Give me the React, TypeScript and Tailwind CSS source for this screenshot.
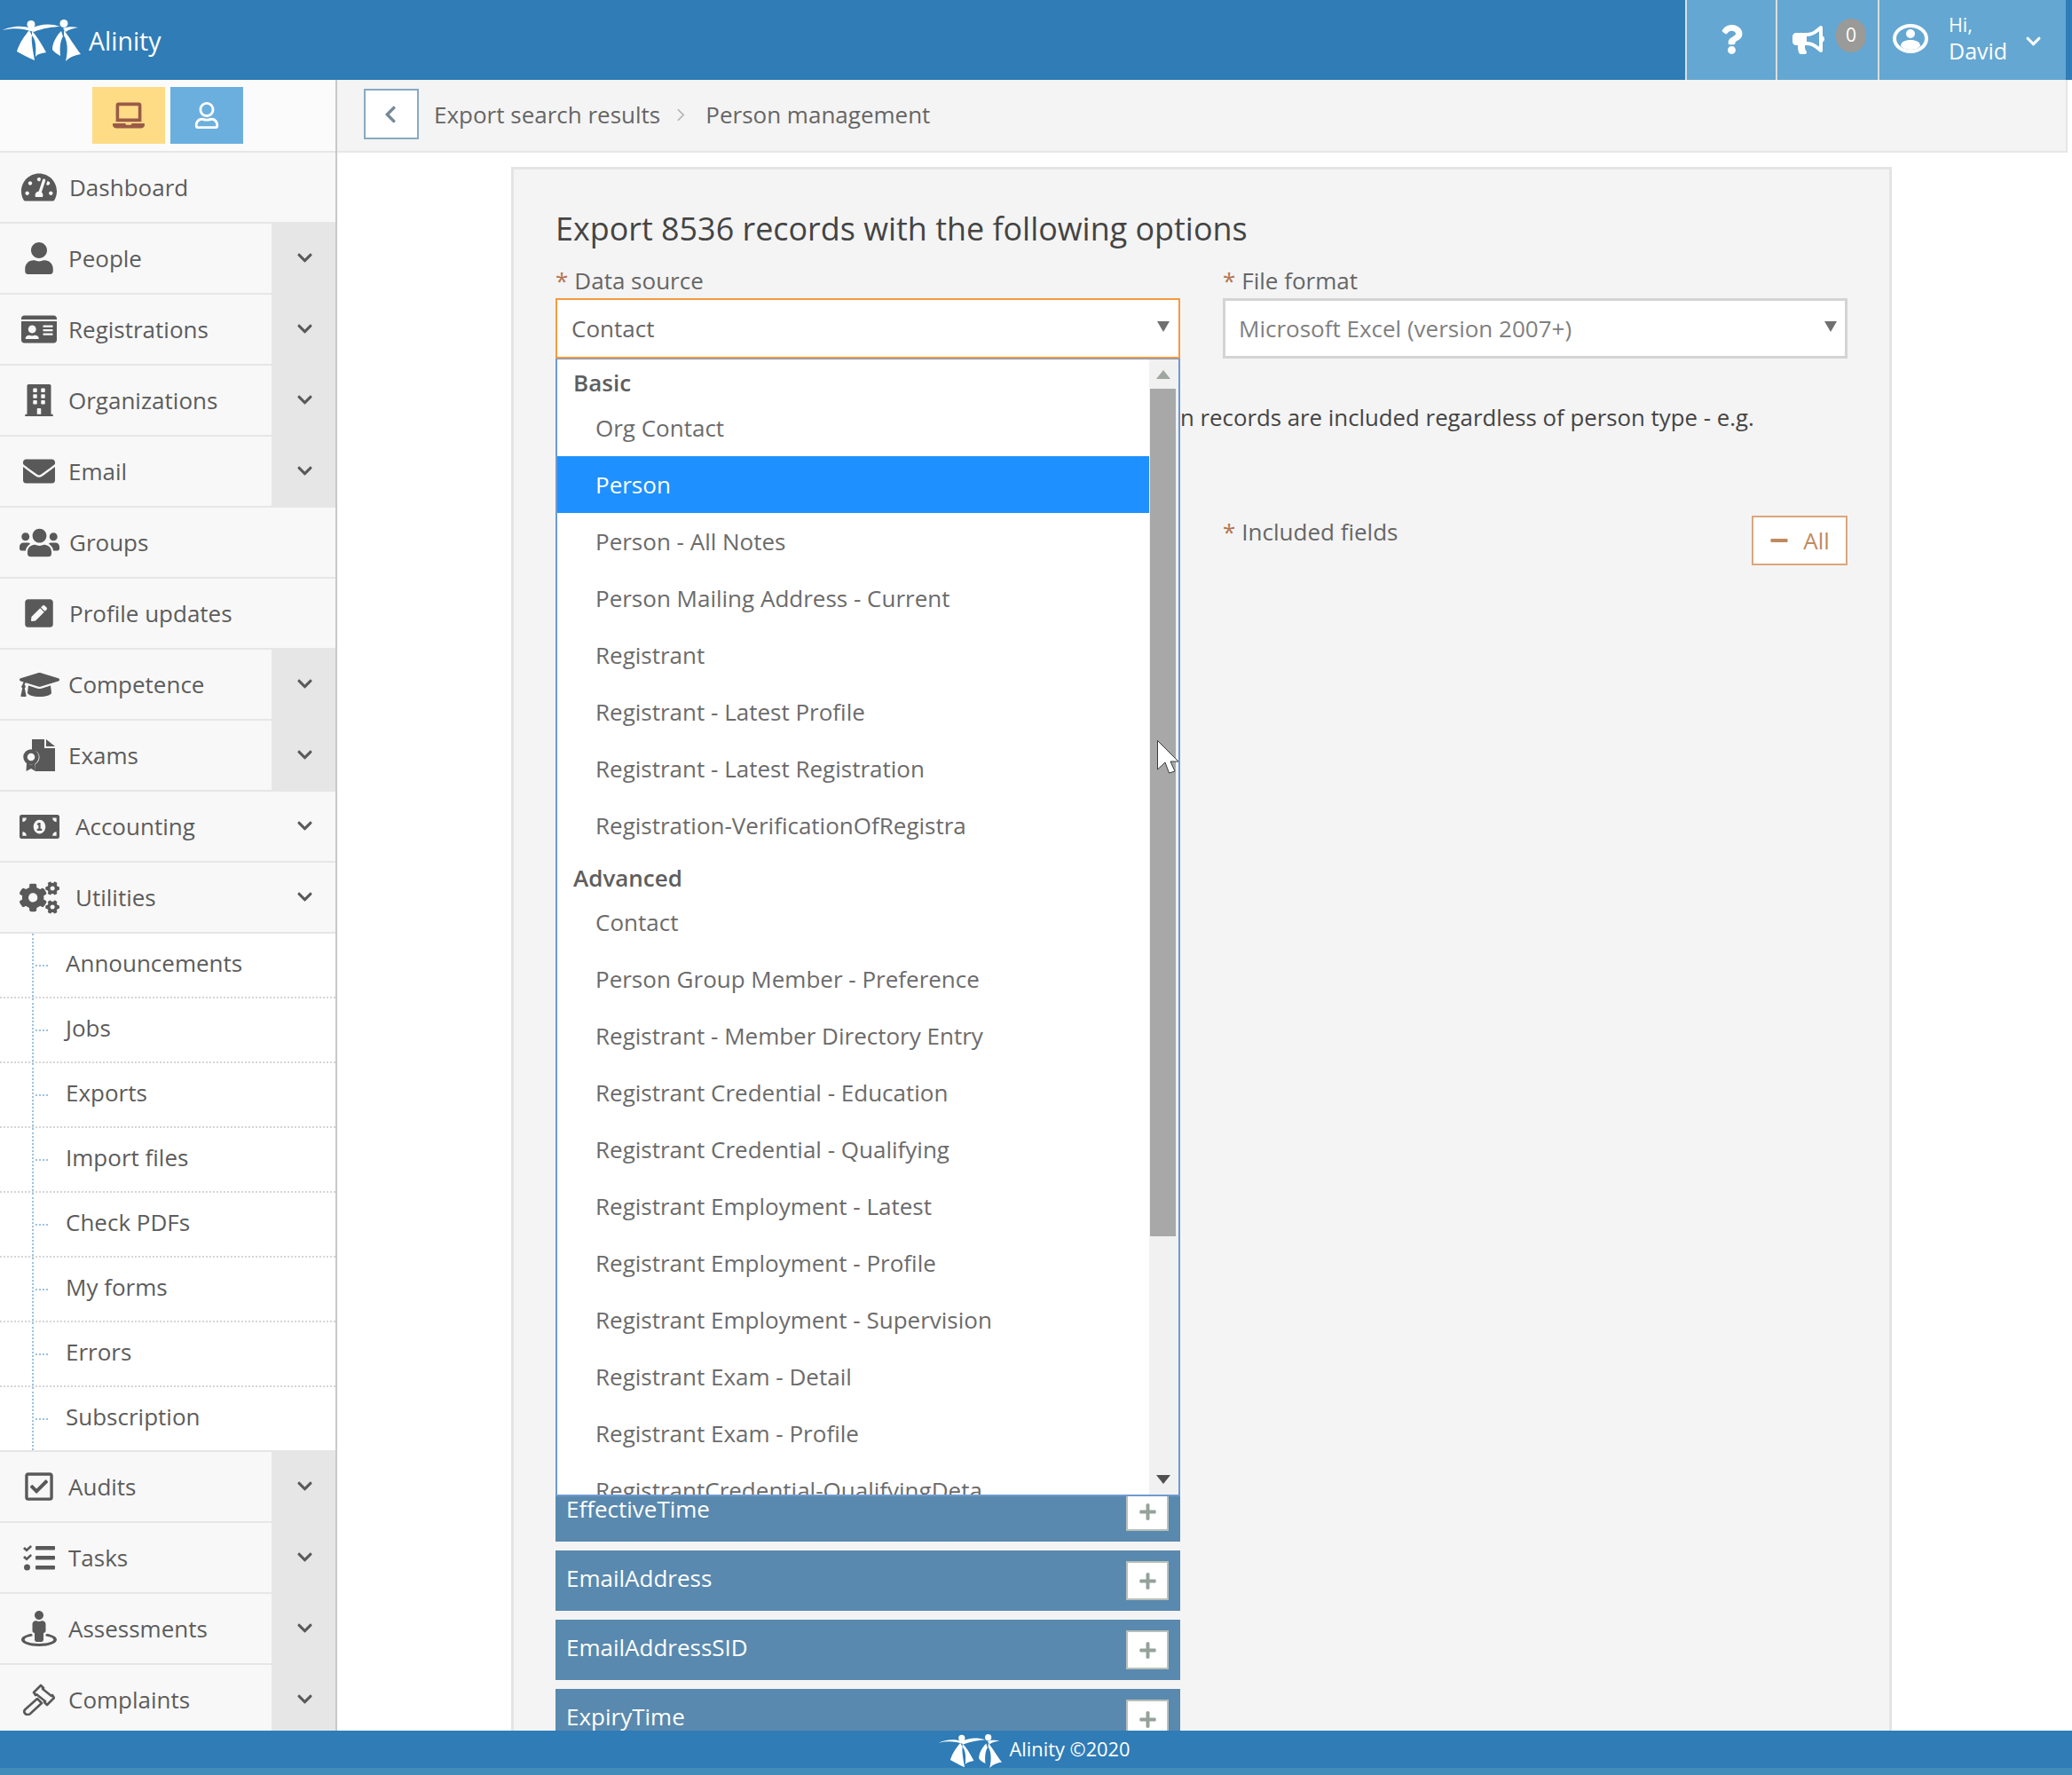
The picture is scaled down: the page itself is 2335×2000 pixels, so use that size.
import type { ReactNode } from 'react'
import {
  FaTachometerAlt, FaUser, FaIdCard, FaBuilding, FaEnvelope, FaUsers, FaPenSquare, FaGraduationCap,
  FaMoneyBillAlt, FaCogs, FaRegCheckSquare, FaStreetView, FaChevronDown, FaChevronLeft, FaLaptop,
  FaRegUser, FaQuestion, FaBullhorn, FaPlus, FaMinus,
} from 'react-icons/fa'

function Logo({ className }: { className: string }) {
  return (
    <svg viewBox="0 0 88 47" className={className} fill="#fff">
      <circle cx="32" cy="5.500" r="4.500" />
      <circle cx="69" cy="4.500" r="4.500" />
      <path d="M0 12C8 8 22 6 32 10C42 5 54 4 65 8C58 8 44 10 35 14C24 10 12 9 0 12Z" />
      <path d="M68 10C73 8 79 8 85 9C80 10 75 11 71 14Z" />
      <path d="M30 12C25 18 19 26 16 36C22 39 28 43 36 46C34 34 32 24 33 18Z" />
      <path d="M33 13C38 18 43 26 49 37C44 38 39 39 37 42C38 30 37 22 33 18Z" />
      <path d="M66 13C60 19 56 27 56 34C58 37 62 39 65 41C64 31 65 24 68 19Z" />
      <path d="M69 12C74 18 81 30 88 39C82 40 76 42 71 47C74 35 73 24 69 18Z" />
    </svg>
  )
}

function AccountIcon() {
  return (
    <svg viewBox="0 0 40 33" preserveAspectRatio="none" className="w-[40px] h-[33px] -mt-[4px]">
      <ellipse cx="20" cy="16.500" rx="18" ry="14.500" fill="none" stroke="#fff" strokeWidth="4" />
      <circle cx="20" cy="11" r="5" fill="#fff" />
      <path d="M9 25C9 20 14 18 20 18C26 18 31 20 31 25C28 28 24 29 20 29C16 29 12 28 9 25Z" fill="#fff" />
    </svg>
  )
}

function ExamIcon() {
  return (
    <svg viewBox="0 0 36 36" className="w-[36px] h-[36px]" fill="#595959">
      <path d="M10 0H24V10H36V36H14V28C20 24 20 16 14 13H10Z" />
      <path d="M26 0L36 8H26Z" />
      <circle cx="9" cy="20" r="6.500" fill="none" stroke="#595959" strokeWidth="4.500" />
      <path d="M4 27L3.500 36L9 33L14 36L13.500 27L9 29Z" />
    </svg>
  )
}

function TasksIcon() {
  return (
    <svg viewBox="0 0 36 29" className="w-[36px] h-[29px]" fill="#595959">
      <path d="M0 4L2 2L4 4L8.500 0L10 2L4 7.500Z" />
      <path d="M0 14L2 12L4 14L8.500 10L10 12L4 17.500Z" />
      <circle cx="4.500" cy="25" r="3.500" />
      <rect x="14" y="1" width="22" height="4.500" rx="1" />
      <rect x="14" y="12" width="22" height="4.500" rx="1" />
      <rect x="14" y="23" width="22" height="4.500" rx="1" />
    </svg>
  )
}

function GavelIcon() {
  return (
    <svg viewBox="0 0 36 36" className="w-[36px] h-[36px]" fill="none" stroke="#595959" strokeWidth="2.600" strokeLinejoin="round">
      <path d="M12 10L20 2L23 5L22 6L32 14L33 13L35 16L27 24L24 21L25 20L15 12L14 13Z" />
      <path d="M16 17L21 22L8 34C6 35.500 4 35.500 2.500 34C1 32.500 1 30.500 2.500 29Z" />
    </svg>
  )
}

type NavItem = { label: string; icon: ReactNode; chevron?: boolean; cell?: boolean; gap?: string }

const topNav: NavItem[] = [
  { label: 'Dashboard', icon: <FaTachometerAlt size={40} />, gap: 'ml-[10px]' },
  { label: 'People', icon: <FaUser size={36} />, chevron: true, cell: true },
  { label: 'Registrations', icon: <FaIdCard size={40} />, chevron: true, cell: true },
  { label: 'Organizations', icon: <FaBuilding size={36} />, chevron: true, cell: true },
  { label: 'Email', icon: <FaEnvelope size={36} />, chevron: true, cell: true },
  { label: 'Groups', icon: <FaUsers size={45} />, gap: 'ml-[10px]' },
  { label: 'Profile updates', icon: <FaPenSquare size={36} />, gap: 'ml-[10px]' },
  { label: 'Competence', icon: <FaGraduationCap size={45} />, chevron: true, cell: true },
  { label: 'Exams', icon: <ExamIcon />, chevron: true, cell: true },
  { label: 'Accounting', icon: <FaMoneyBillAlt size={45} />, chevron: true, gap: 'ml-[17px]' },
  { label: 'Utilities', icon: <FaCogs size={45} />, chevron: true, gap: 'ml-[17px]' },
]

const subNav = ['Announcements', 'Jobs', 'Exports', 'Import files', 'Check PDFs', 'My forms', 'Errors', 'Subscription']

const bottomNav: NavItem[] = [
  { label: 'Audits', icon: <FaRegCheckSquare size={36} />, chevron: true, cell: true },
  { label: 'Tasks', icon: <TasksIcon />, chevron: true, cell: true },
  { label: 'Assessments', icon: <FaStreetView size={40} />, chevron: true, cell: true },
  { label: 'Complaints', icon: <GavelIcon />, chevron: true, cell: true },
]

const basicOptions = [
  'Org Contact', 'Person', 'Person - All Notes', 'Person Mailing Address - Current', 'Registrant',
  'Registrant - Latest Profile', 'Registrant - Latest Registration', 'Registration-VerificationOfRegistra',
]

const advancedOptions = [
  'Contact', 'Person Group Member - Preference', 'Registrant - Member Directory Entry',
  'Registrant Credential - Education', 'Registrant Credential - Qualifying', 'Registrant Employment - Latest',
  'Registrant Employment - Profile', 'Registrant Employment - Supervision', 'Registrant Exam - Detail',
  'Registrant Exam - Profile', 'RegistrantCredential-QualifyingDeta',
]

// rows behind the open dropdown have no readable label
const fieldRows = ['', '', '', '', '', '', '', '', '', '', '', '', 'EffectiveTime', 'EmailAddress', 'EmailAddressSID', 'ExpiryTime']

function NavRow({ item }: { item: NavItem }) {
  return (
    <div className="h-[80px] shrink-0 flex border-b-2 border-[#e6e6e6] bg-[#f8f8f8]">
      <div className="flex-1 flex items-center pl-[20px]">
        <span className="w-[48px] flex justify-center text-[#595959]">{item.icon}</span>
        <span className={`${item.gap ?? 'ml-[9px]'} text-[26px] text-[#5c5c5c]`}>{item.label}</span>
      </div>
      {item.chevron && (
        <div className={`w-[72px] -mb-[2px] flex items-center justify-center pb-[4px] pl-[3px] ${item.cell ? 'bg-[#e6e6e6]' : ''}`}>
          <FaChevronDown size={19} className="text-[#595959]" />
        </div>
      )}
    </div>
  )
}

function Required({ children }: { children: string }) {
  return (
    <div className="h-[36px] flex items-center text-[26px] text-[#666666]">
      <span className="text-[#b5724f] mr-[7px]">*</span>
      {children}
    </div>
  )
}

function Caret({ className }: { className: string }) {
  return (
    <svg viewBox="0 0 14 12" className={`w-[14px] h-[12px] ${className}`} fill="#707070">
      <path d="M0 0H14L7 12Z" />
    </svg>
  )
}

export default function App() {
  return (
    <div className="w-[2335px] h-[2000px] flex flex-col overflow-hidden bg-white font-['Open_Sans',sans-serif]">
      {/* Top bar */}
      <header className="h-[90px] shrink-0 flex bg-[#2f7cb6] pr-[7px]">
        <div className="flex-1 flex items-center pl-[3px]">
          <Logo className="w-[88px] h-[47px]" />
          <span className="ml-[9px] mt-[3px] text-[28.500px] text-white">Alinity</span>
        </div>
        <div className="w-[102px] border-l-2 border-[#dddddd] bg-[#64a7d2] flex items-center justify-center">
          <FaQuestion size={33} className="text-white -mt-[1px]" />
        </div>
        <div className="w-[115px] border-l-2 border-[#dddddd] bg-[#64a7d2] flex items-center pl-[17px]">
          <FaBullhorn size={36} className="text-white" />
          <span className="ml-[13px] -mt-[10px] w-[34px] h-[38px] rounded-full bg-[#9a9a98] flex items-center justify-center text-[21px] text-white">0</span>
        </div>
        <div className="w-[212px] border-l-2 border-[#dddddd] bg-[#64a7d2] flex items-center pl-[15px] text-white">
          <AccountIcon />
          <div className="ml-[23px] -mt-[5px] flex flex-col">
            <span className="text-[21.500px] leading-[28px]">Hi,</span>
            <span className="text-[25px] leading-[30px]">David</span>
          </div>
          <FaChevronDown size={19} className="ml-[20px] mt-[2px]" />
        </div>
      </header>

      <div className="flex-1 min-h-0 flex">
        {/* Side menu */}
        <aside className="w-[380px] shrink-0 border-r-2 border-[#c8c8c8] flex flex-col overflow-hidden">
          <div className="h-[82px] shrink-0 flex justify-center gap-[6px] pt-[8px] bg-[#fbfbfb] border-b-2 border-[#e6e6e6] -ml-[1px]">
            <div className="w-[82px] h-[64px] bg-[#fddc85] flex items-center justify-center">
              <FaLaptop size={36} className="text-[#9a5a48]" />
            </div>
            <div className="w-[82px] h-[64px] bg-[#6bafdf] flex items-center justify-center">
              <FaRegUser size={30} className="text-white" />
            </div>
          </div>
          {topNav.map((item) => (
            <NavRow key={item.label} item={item} />
          ))}
          {subNav.map((label, i) => (
            <div
              key={label}
              className={`h-[73px] shrink-0 flex items-center bg-white border-b-2 ${i === subNav.length - 1 ? 'border-solid border-[#e6e6e6]' : 'border-dotted border-[#d6d6d6]'}`}
            >
              <span className="ml-[36px] self-stretch border-l-2 border-dotted border-[#9cc2e0]" />
              <span className="ml-[2px] w-[14px] border-t-2 border-dotted border-[#9cc2e0]" />
              <span className="ml-[20px] -mt-[5px] text-[26px] text-[#5c5c5c]">{label}</span>
            </div>
          ))}
          {bottomNav.map((item) => (
            <NavRow key={item.label} item={item} />
          ))}
        </aside>

        <main className="flex-1 min-w-0 pr-[5px] flex flex-col overflow-hidden">
          {/* Breadcrumb */}
          <div className="h-[82px] shrink-0 flex items-center bg-[#f4f4f4] border-b-2 border-r-2 border-[#e6e6e6] pl-[30px] pb-[2px] text-[26px] text-[#666666]">
            <button className="w-[62px] h-[57px] -mt-[1px] pr-[3px] bg-white border-2 border-[#88a9c2] flex items-center justify-center">
              <FaChevronLeft size={22} className="text-[#74899a]" />
            </button>
            <span className="ml-[17px]">Export search results</span>
            <svg viewBox="0 0 10 16" className="w-[9px] h-[15px] ml-[19px] mr-[23px]" fill="none" stroke="#b0b0b0" strokeWidth="1.800">
              <path d="M1 1L8 8L1 15" />
            </svg>
            <span>Person management</span>
          </div>

          {/* Export options */}
          <div className="mt-[16px] ml-[196px] w-[1556px] flex-1 min-h-0 overflow-hidden bg-[#f4f4f4] border-t-[3px] border-x-[3px] border-[#e4e4e4] pl-[47px] pr-[44px] pt-[42px]">
            <h1 className="text-[35.900px] leading-[50px] text-[#444444]">Export 8536 records with the following options</h1>
            <div className="mt-[15px] grid grid-cols-[704px_704px] gap-x-[48px]">
              <div className="relative">
                <Required>Data source</Required>
                <div className="mt-[2px] h-[68px] bg-white border-2 border-[#f59a3f] flex items-center justify-between pl-[16px] pr-[10px] text-[26px] text-[#666666]">
                  Contact
                  <Caret className="-mt-[4px]" />
                </div>

                {/* Open dropdown */}
                <div className="absolute z-10 left-0 top-[106px] w-full h-[1282px] flex bg-white border-2 border-t-[1px] border-[#6d9ad0] overflow-hidden">
                  <div className="flex-1 min-w-0 text-[26px] text-[#6b6b6b]">
                    <div className="h-[45px] flex items-center pl-[18px] pt-[8px] font-semibold text-[#5e5e5e]">Basic</div>
                    {basicOptions.map((option) => (
                      <div
                        key={option}
                        className={`h-[64px] flex items-center pl-[43px] ${option === 'Person' ? 'bg-[#1e90ff] text-white' : ''}`}
                      >
                        {option}
                      </div>
                    ))}
                    <div className="h-[45px] flex items-center pl-[18px] pt-[9px] font-semibold text-[#5e5e5e]">Advanced</div>
                    {advancedOptions.map((option) => (
                      <div key={option} className="h-[64px] flex items-center pl-[43px]">
                        {option}
                      </div>
                    ))}
                  </div>
                  <div className="w-[33px] shrink-0 bg-[#f1f1f1] flex flex-col items-center">
                    <div className="h-[33px] w-full flex items-center justify-center pr-[2px]">
                      <svg viewBox="0 0 16 10" className="w-[16px] h-[10px]" fill="#a0a6a0">
                        <path d="M8 0L16 10H0Z" />
                      </svg>
                    </div>
                    <div className="h-[955px] w-[29px] -ml-[3px] bg-[#a8a8a8]" />
                    <div className="mt-auto h-[22px] w-full flex items-start justify-center pr-[2px]">
                      <svg viewBox="0 0 16 10" className="w-[16px] h-[10px]" fill="#505050">
                        <path d="M0 0H16L8 10Z" />
                      </svg>
                    </div>
                  </div>
                </div>
              </div>
              <div>
                <Required>File format</Required>
                <div className="mt-[2px] h-[68px] bg-white border-[3px] border-[#d4d4d4] flex items-center justify-between pl-[15px] pr-[9px] text-[26px] text-[#808080]">
                  Microsoft Excel (version 2007+)
                  <Caret className="-mt-[4px]" />
                </div>
              </div>
            </div>

            <p className="mt-[48px] ml-[704px] h-[36px] leading-[36px] text-[25.800px] text-[#444444] whitespace-nowrap">
              n records are included regardless of person type - e.g.
            </p>

            <div className="mt-[93px] grid grid-cols-[704px_704px] gap-x-[48px]">
              <div className="pt-[152px] flex flex-col gap-[10px]">
                {fieldRows.map((field, i) => (
                  <div key={i} className="h-[68px] shrink-0 flex items-center justify-between bg-[#5989ae] pl-[12px] pr-[13px] text-[26px] text-white">
                    <span className="-mt-[5px]">{field}</span>
                    <button className="w-[48px] h-[44px] bg-white border-2 border-[#b9bfb9] flex items-center justify-center">
                      <FaPlus size={21} className="text-[#95a29a]" />
                    </button>
                  </div>
                ))}
              </div>
              <div className="flex items-start justify-between">
                <Required>Included fields</Required>
                <button className="w-[108px] h-[56px] bg-white border-2 border-[#d9a77f] flex items-center justify-center gap-[16px] text-[26px] text-[#c08a60]">
                  <FaMinus size={22} />
                  All
                </button>
              </div>
            </div>
          </div>
        </main>
      </div>

      {/* Footer */}
      <footer className="h-[50px] shrink-0 bg-[#418cb8] relative z-20">
        <div className="h-[42px] bg-[#2f7cb6] flex items-center justify-center pr-[4px] text-[21.800px] text-white">
          <Logo className="w-[71px] h-[38px] mt-[3px]" />
          <span className="ml-[9px]">Alinity ©2020</span>
        </div>
      </footer>

      {/* Mouse pointer caught in the capture */}
      <svg viewBox="0 0 24 38" className="absolute z-30 left-[1304px] top-[834px] w-[24px] h-[38px]" fill="#fff" stroke="#3a3a3a" strokeWidth="1">
        <path d="M0.500 0.500V33L9 25L13.500 37L20 35L15 24H24Z" />
      </svg>
    </div>
  )
}
